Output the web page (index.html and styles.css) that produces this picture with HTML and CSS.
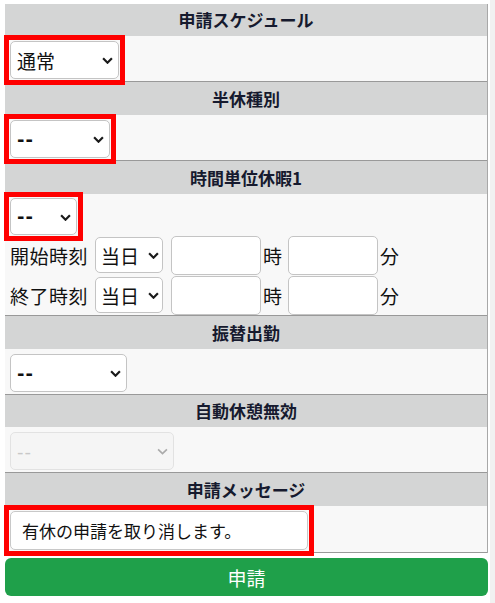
FILE: index.html
```html
<!DOCTYPE html>
<html lang="ja">
<head>
  <meta charset="UTF-8">
  <meta name="viewport" content="width=device-width, initial-scale=1.0">
  <title>申請</title>
  <link rel="stylesheet" href="styles.css">
</head>
<body>

  <div class="form">
    <div class="head head-first">申請スケジュール</div>
    <div class="cell">
      <span class="pick mark w-sched">
        <select class="sel"><option>通常</option></select>
        <svg class="chev" viewBox="0 0 10 6"><path d="M1 1l4 4 4-4"/></svg>
      </span>
    </div>

    <div class="head">半休種別</div>
    <div class="cell">
      <span class="pick mark w-half">
        <select class="sel dash"><option>--</option></select>
        <svg class="chev" viewBox="0 0 10 6"><path d="M1 1l4 4 4-4"/></svg>
      </span>
    </div>

    <div class="head">時間単位休暇1</div>
    <div class="cell cell-time">
      <span class="pick mark w-hour">
        <select class="sel dash"><option>--</option></select>
        <svg class="chev" viewBox="0 0 10 6"><path d="M1 1l4 4 4-4"/></svg>
      </span>
      <div class="time-row">
        <span class="label">開始時刻</span>
        <span class="pick w-day">
          <select class="sel sel-day"><option>当日</option></select>
          <svg class="chev" viewBox="0 0 10 6"><path d="M1 1l4 4 4-4"/></svg>
        </span>
        <input class="num" type="text">
        <span class="unit">時</span>
        <input class="num" type="text">
        <span class="unit">分</span>
      </div>
      <div class="time-row">
        <span class="label">終了時刻</span>
        <span class="pick w-day">
          <select class="sel sel-day"><option>当日</option></select>
          <svg class="chev" viewBox="0 0 10 6"><path d="M1 1l4 4 4-4"/></svg>
        </span>
        <input class="num" type="text">
        <span class="unit">時</span>
        <input class="num" type="text">
        <span class="unit">分</span>
      </div>
    </div>

    <div class="head">振替出勤</div>
    <div class="cell">
      <span class="pick w-subst">
        <select class="sel dash"><option>--</option></select>
        <svg class="chev" viewBox="0 0 10 6"><path d="M1 1l4 4 4-4"/></svg>
      </span>
    </div>

    <div class="head head-short">自動休憩無効</div>
    <div class="cell">
      <span class="pick w-break off">
        <select class="sel dash" disabled><option>--</option></select>
        <svg class="chev" viewBox="0 0 10 6"><path d="M1 1l4 4 4-4"/></svg>
      </span>
    </div>

    <div class="head">申請メッセージ</div>
    <div class="cell cell-msg">
      <span class="mark msg-wrap">
        <input class="msg" type="text" value="有休の申請を取り消します。">
      </span>
    </div>
  </div>

  <button class="submit">申請</button>

</body>
</html>
```

FILE: styles.css
```css
html {
  background: #f1f1f1;
}
body {
  margin: 0;
  width: 490px;
  min-height: 100vh;
  padding-top: 4px;
  box-sizing: border-box;
  background: #fff;
  font-family: "Noto Sans CJK JP", "Noto Sans", sans-serif;
  color: #111;
}
.form {
  margin-left: 5px;
  width: 483px;
  border-right: 1px solid #a8a8a8;
  box-sizing: border-box;
}
.head {
  height: 33px;
  line-height: 33px;
  background: #d4d5d5;
  text-align: center;
  font-size: 17px;
  font-weight: bold;
  color: #161a2e;
}
.head-first,
.head-short {
  height: 32px;
  line-height: 32px;
}
.cell {
  background: #f8f8f8;
  padding: 5px 5px 2px;
  border-bottom: 1px solid #999;
}
.cell-time {
  padding: 4px 5px 0;
}
.cell-msg {
  padding: 5px 5px 2px;
}
.pick {
  position: relative;
  display: inline-block;
  vertical-align: top;
}
.mark {
  outline: 5px solid #f00;
  outline-offset: 1px;
}
.sel {
  -webkit-appearance: none;
  appearance: none;
  display: block;
  width: 100%;
  height: 38px;
  margin: 0;
  padding: 0 0 0 6px;
  border: 1px solid #c4c4c4;
  border-radius: 5px;
  background: #fff;
  font-family: inherit;
  font-size: 19px;
  color: #111;
}
.dash {
  font-family: "DejaVu Sans", sans-serif;
  font-weight: bold;
  font-size: 18px;
  letter-spacing: 1px;
}
.chev {
  position: absolute;
  right: 6px;
  top: 50%;
  width: 11px;
  height: 7px;
  margin-top: -3px;
  fill: none;
  stroke: #1a1a1a;
  stroke-width: 2;
  pointer-events: none;
}
.w-sched { width: 109px; }
.w-half { width: 100px; }
.w-hour { width: 67px; margin-bottom: 0; }
.w-hour .sel { height: 37px; }
.w-subst { width: 117px; }
.w-break { width: 164px; }
.w-day { width: 68px; }
.w-day .chev { right: 4px; }
.sel-day {
  height: 36px;
  padding-left: 5px;
}
.off .sel {
  background: #f4f4f4;
  border-color: #dadada;
  color: #b4b4b4;
  font-weight: normal;
}
.off .chev {
  stroke: #aaa;
  stroke-width: 1.5;
}
.time-row {
  display: flex;
  align-items: center;
  height: 40px;
  font-size: 19px;
}
.label {
  margin-right: 7px;
  letter-spacing: 0.5px;
}
.num {
  width: 90px;
  height: 39px;
  margin-left: 8px;
  padding: 0;
  border: 1px solid #c4c4c4;
  border-radius: 5px;
  background: #fff;
  box-sizing: border-box;
}
.unit + .num {
  margin-left: 6px;
}
.unit {
  margin-left: 2px;
}
.msg-wrap {
  display: inline-block;
  vertical-align: top;
}
.msg {
  display: block;
  width: 298px;
  height: 39px;
  padding: 0 0 0 11px;
  border: 1px solid #c8c8c8;
  border-radius: 5px;
  background: #fff;
  box-sizing: border-box;
  font-family: inherit;
  font-size: 17px;
  color: #111;
}
.submit {
  display: block;
  margin: 5px 0 0 5px;
  width: 483px;
  height: 38px;
  border: none;
  border-radius: 6px;
  background: #1fa04a;
  color: #fff;
  font-family: inherit;
  font-size: 19px;
  cursor: pointer;
}
```
